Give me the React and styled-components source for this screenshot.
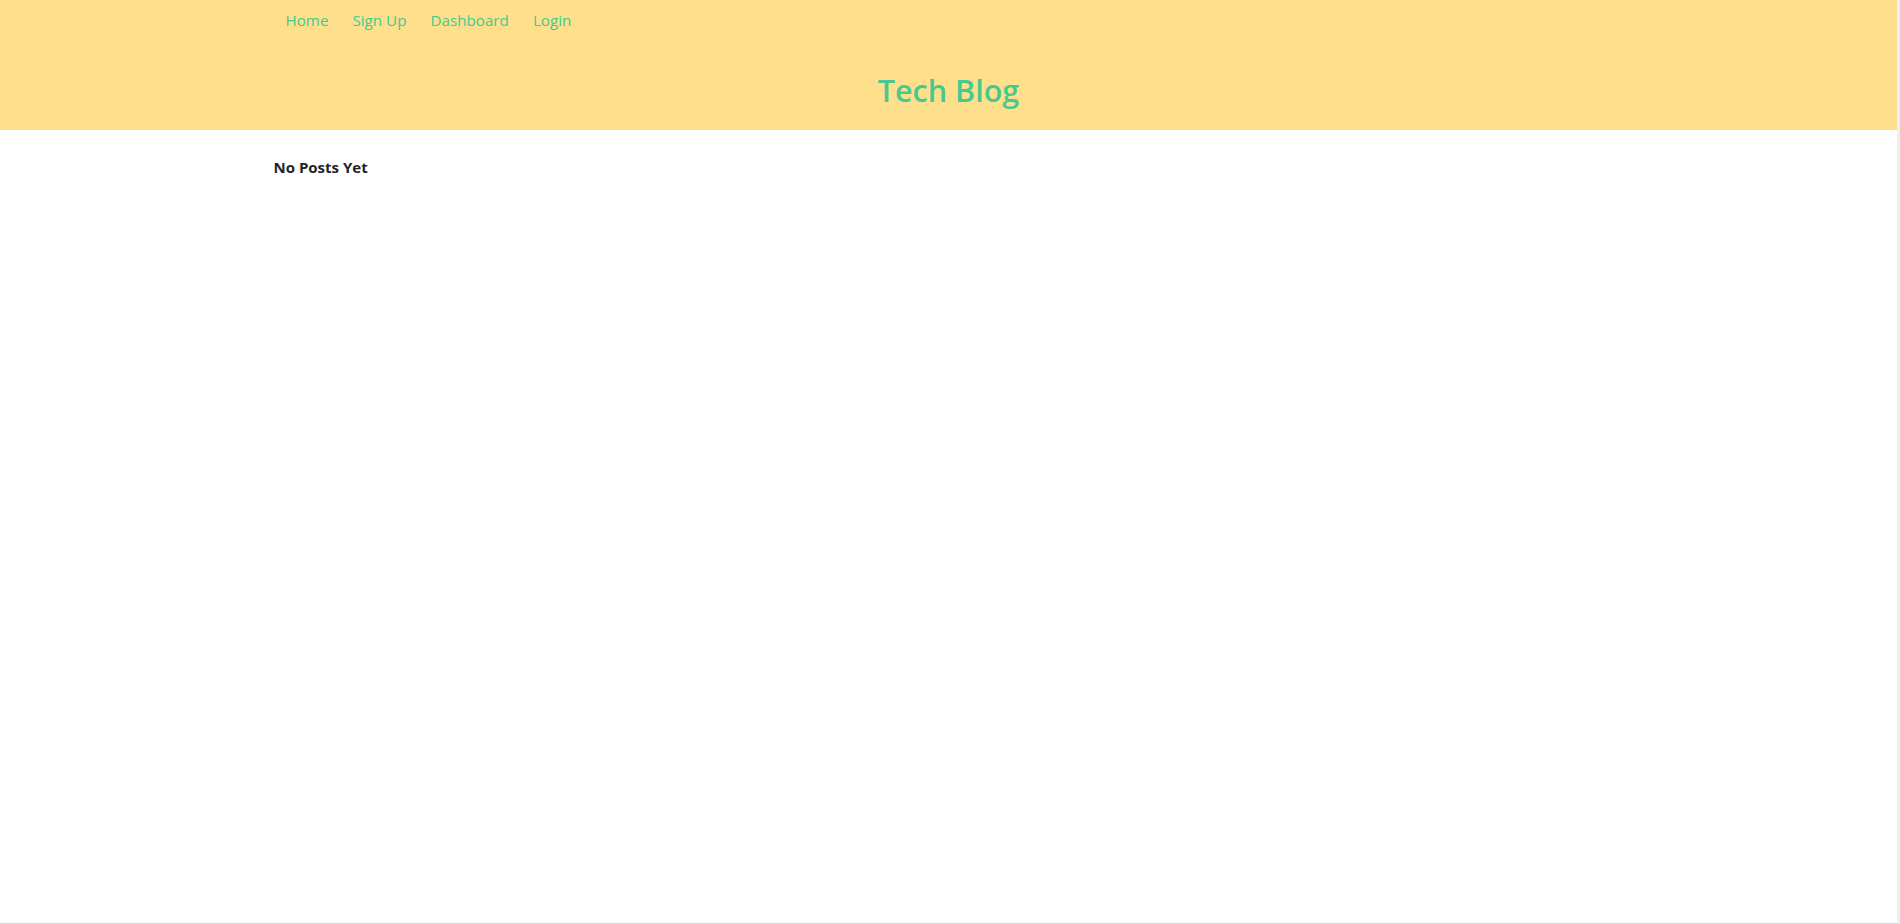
import React from 'react';
import styled, { createGlobalStyle } from 'styled-components';

const GlobalStyle = createGlobalStyle`
  html, body {
    margin: 0;
    padding: 0;
    background: #ffffff;
  }
  body {
    font-family: "Segoe UI", "Open Sans", "Noto Sans", sans-serif;
    color: #212529;
  }
`

const Page = styled.div`
  min-height: 100vh;
  box-sizing: border-box;
  border-right: 3px solid #efefef;
  border-bottom: 1px solid #d6dbe0;
`

const Header = styled.header`
  background: #fedf8b;
  height: 130px;
  display: flex;
  flex-direction: column;
`

const Container = styled.div`
  max-width: 1350px;
  width: 100%;
  margin: 0 auto;
  box-sizing: border-box;
`

const Nav = styled.nav`
  display: flex;
  align-items: center;
  height: 40px;
`

const NavLink = styled.a`
  color: #46c98f;
  font-size: 15.2px;
  padding: 0 12px;
  text-decoration: none;
  line-height: 40px;
`

const Title = styled.h1`
  margin: 0;
  padding-top: 32px;
  text-align: center;
  font-size: 30.5px;
  font-weight: 600;
  line-height: 1.2;
  color: #46c98f;
`

const Main = styled.main`
  padding-top: 26px;
`

const Empty = styled.h2`
  margin: 0;
  font-size: 15px;
  font-weight: 700;
  line-height: 1.5;
  color: #212529;
`

const links = ['Home', 'Sign Up', 'Dashboard', 'Login'];

const App = () => (
  <Page>
    <GlobalStyle />
    <Header>
      <Container>
        <Nav>
          {links.map(label => (
            <NavLink href="#" key={label}>{label}</NavLink>
          ))}
        </Nav>
      </Container>
      <Title>Tech Blog</Title>
    </Header>
    <Main>
      <Container>
        <Empty>No Posts Yet</Empty>
      </Container>
    </Main>
  </Page>
)

export default App;
